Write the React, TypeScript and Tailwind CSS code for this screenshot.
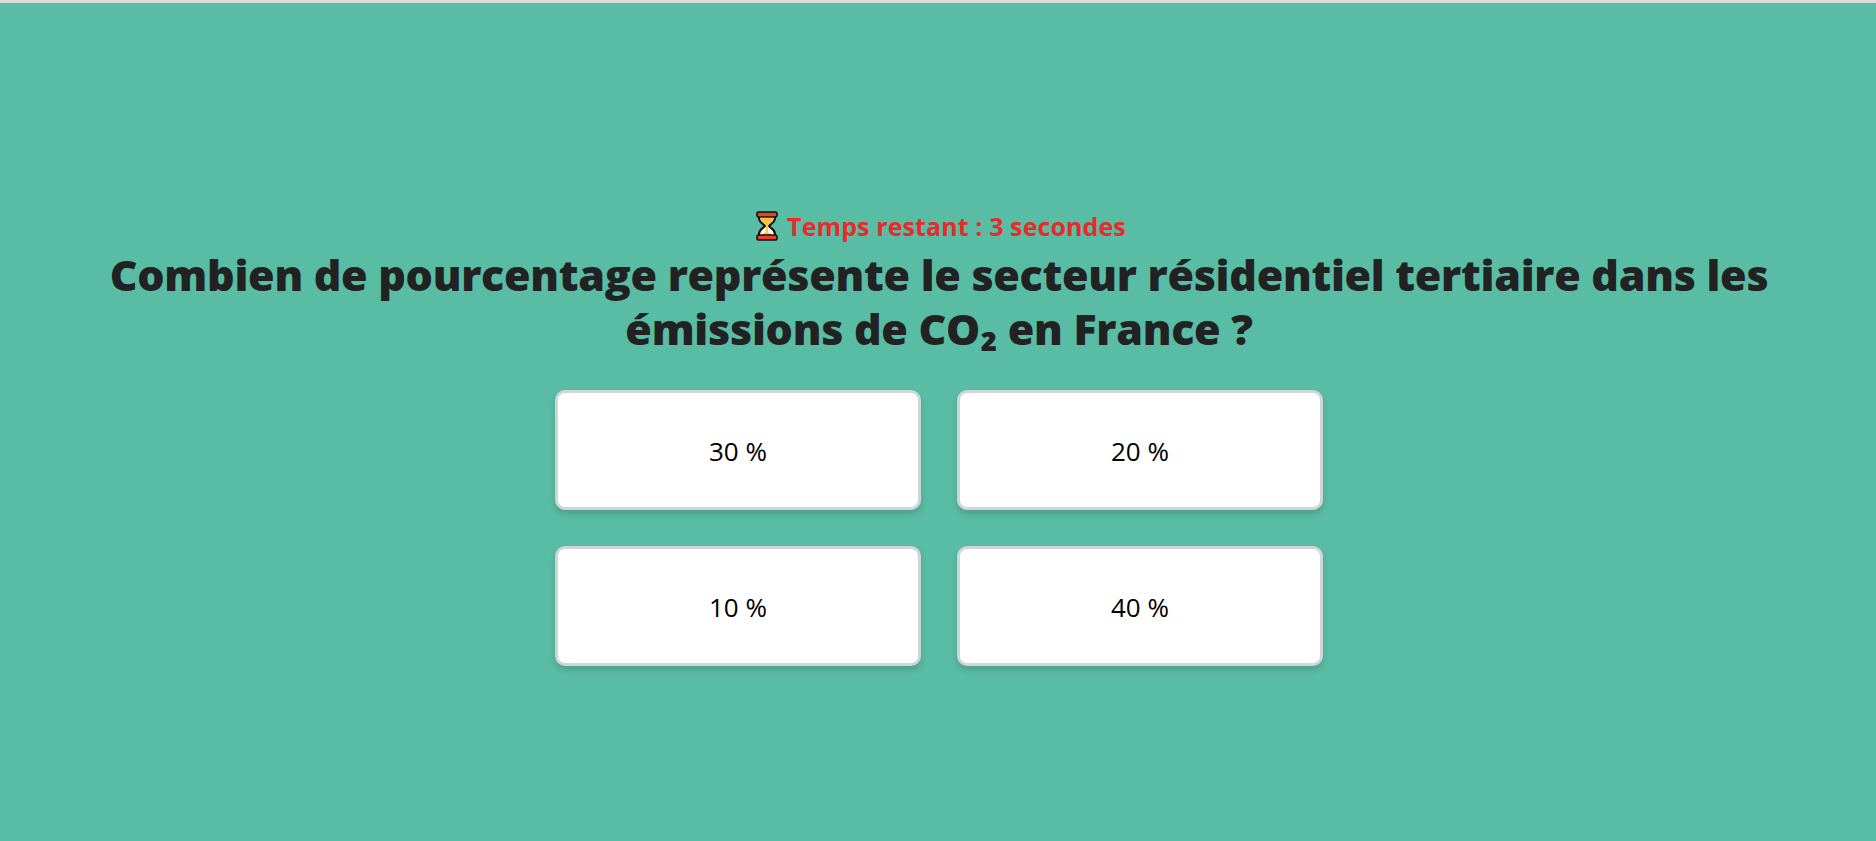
export default function App() {
  const answers = ["30 %", "20 %", "10 %", "40 %"];
  const font = { fontFamily: '"Open Sans", "Noto Sans", sans-serif' };
  return (
    <div style={font} className="h-[841px] w-full overflow-hidden bg-[#59bca4] flex flex-col">
      <div className="h-[3px] bg-[#d9dcdc] shrink-0" />
      <div className="flex-1 flex flex-col items-center pl-[2px] pt-[206px]">
        <div className="ml-[3px] flex items-center h-[34px] text-[25px] leading-[34px] tracking-[0.1px] font-bold text-[#e62b2b]">
          <svg width="24" height="32" viewBox="0 0 24 32" className="mr-[8px]">
            <path d="M4 3 H20 V8 C20 13 15 14 14 16 C15 18 20 19 20 24 V29 H4 V24 C4 19 9 18 10 16 C9 14 4 13 4 8 Z" fill="#fff8e8" stroke="#111" strokeWidth="2" strokeLinejoin="round" />
            <path d="M5.5 8 H18.5 C18.5 12 13.5 13 12.8 16 V23 H11.2 V16 C10.5 13 5.5 12 5.5 8 Z" fill="#fbbf3c" />
            <path d="M6 25.5 C7 23.5 10 22.5 12 22.5 C14 22.5 17 23.5 18 25.5 Z" fill="#fbbf3c" />
            <rect x="2" y="2" width="20" height="5" rx="1.5" fill="#e8412a" stroke="#111" strokeWidth="1.6" />
            <rect x="2" y="25" width="20" height="5" rx="1.5" fill="#e8412a" stroke="#111" strokeWidth="1.6" />
          </svg>
          <span>Temps restant : 3 secondes</span>
        </div>
        <h1 className="mt-[5px] w-[1700px] text-center text-[43px] leading-[54px] tracking-[-0.3px] font-extrabold text-[#222222]">
          Combien de pourcentage représente le secteur résidentiel tertiaire dans les émissions de CO₂ en France ?
        </h1>
        <div className="mt-[34px] grid grid-cols-[366px_366px] gap-[36px]">
          {answers.map((a) => (
            <button
              key={a}
              className="h-[120px] rounded-[10px] border-[3px] border-[#d1d5db] bg-white pt-[2px] text-[26px] font-medium text-black shadow-[0_4px_6px_rgba(0,0,0,0.15)]"
            >
              {a}
            </button>
          ))}
        </div>
      </div>
    </div>
  );
}
